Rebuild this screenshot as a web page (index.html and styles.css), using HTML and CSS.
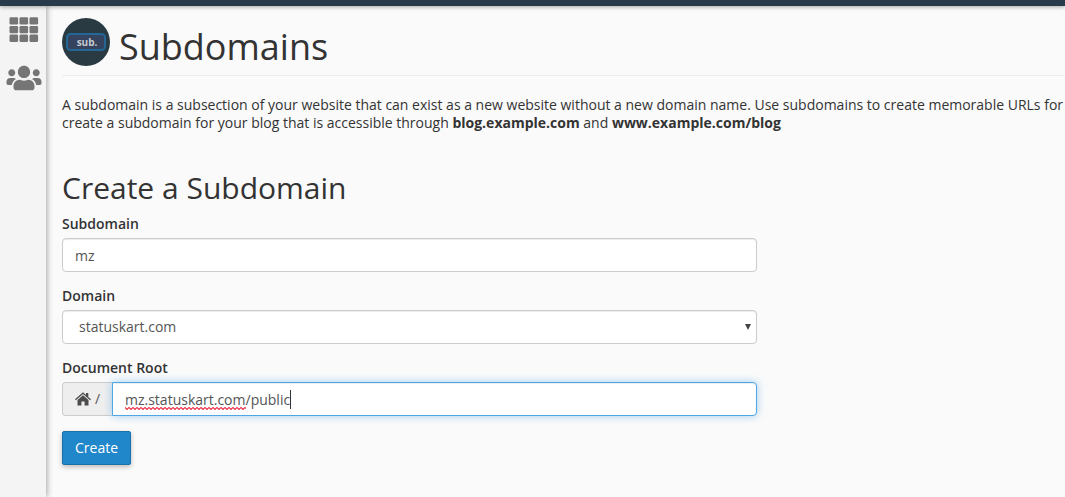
FILE: index.html
```html
<!DOCTYPE html>
<html lang="en">
<head>
<meta charset="utf-8">
<meta name="viewport" content="width=device-width, initial-scale=1">
<title>Subdomains</title>
<link rel="stylesheet" href="styles.css">
</head>
<body>
<header class="topbar"></header>
<div class="shell">
  <nav class="sidebar" aria-label="Main">
    <a class="nav-link" href="#home" aria-label="Home">
      <svg width="30" height="26" viewBox="0 0 30 26" fill="currentColor" aria-hidden="true">
        <rect x="0.5" y="0.2" width="8.6" height="7.4" rx="1.3"/><rect x="10.5" y="0.2" width="8.6" height="7.4" rx="1.3"/><rect x="20.5" y="0.2" width="8.6" height="7.4" rx="1.3"/>
        <rect x="0.5" y="9" width="8.6" height="7.2" rx="1.3"/><rect x="10.5" y="9" width="8.6" height="7.2" rx="1.3"/><rect x="20.5" y="9" width="8.6" height="7.2" rx="1.3"/>
        <rect x="0.5" y="17.600" width="8.6" height="7.4" rx="1.3"/><rect x="10.5" y="17.600" width="8.6" height="7.4" rx="1.3"/><rect x="20.5" y="17.600" width="8.6" height="7.4" rx="1.3"/>
      </svg>
    </a>
    <a class="nav-link" href="#users" aria-label="User Manager">
      <svg width="36" height="28" viewBox="0 0 640 512" fill="currentColor" aria-hidden="true">
        <path d="M96 224c35.300 0 64-28.700 64-64s-28.700-64-64-64-64 28.700-64 64 28.700 64 64 64zm448 0c35.300 0 64-28.700 64-64s-28.700-64-64-64-64 28.700-64 64 28.700 64 64 64zm32 32h-64c-17.600 0-33.500 7.100-45.100 18.600 40.300 22.100 68.900 62 75.100 109.400h66c17.700 0 32-14.300 32-32v-32c0-35.300-28.700-64-64-64zm-256 0c61.900 0 112-50.100 112-112S381.900 32 320 32 208 82.100 208 144s50.100 112 112 112zm76.800 32h-8.300c-20.800 10-43.900 16-68.500 16s-47.600-6-68.500-16h-8.300C179.600 288 128 339.600 128 403.200V432c0 26.500 21.500 48 48 48h288c26.500 0 48-21.500 48-48v-28.800c0-63.600-51.600-115.200-115.200-115.200zm-223.700-13.400C161.500 263.100 145.600 256 128 256H64c-35.300 0-64 28.700-64 64v32c0 17.700 14.300 32 32 32h65.900c6.300-47.400 34.900-87.300 75.200-109.400z"/>
      </svg>
    </a>
  </nav>
  <main class="content">
    <h1 class="page-title">
      <svg class="page-icon" width="48" height="48" viewBox="0 0 48 48" aria-hidden="true">
        <circle cx="24" cy="24" r="24" fill="#293a42"/>
        <rect x="5" y="16" width="38" height="16" rx="3.500" fill="#35435e" stroke="#236797" stroke-width="2"/>
        <text class="icon-text" x="25" y="28" text-anchor="middle">sub.</text>
      </svg>
      <span>Subdomains</span>
    </h1>
    <p class="intro">A subdomain is a subsection of your website that can exist as a new website without a new domain name. Use subdomains to create memorable URLs for create a subdomain for your blog that is accessible through <strong>blog.example.com</strong> and <strong>www.example.com/blog</strong></p>
    <h2 class="section-title">Create a Subdomain</h2>
    <form class="form">
      <div class="field">
        <label class="label" for="subdomain">Subdomain</label>
        <input class="control" id="subdomain" type="text" value="mz">
      </div>
      <div class="field">
        <label class="label" for="domain">Domain</label>
        <div class="select-wrap">
          <select class="control select" id="domain"><option>statuskart.com</option></select>
          <svg class="arrow" width="6" height="6" viewBox="0 0 6 6" aria-hidden="true"><path d="M0 0h6L3 6z" fill="#444"/></svg>
        </div>
      </div>
      <div class="field">
        <label class="label" for="root">Document Root</label>
        <div class="group">
          <span class="addon">
            <svg width="16" height="14" viewBox="0 0 16 14" fill="#4c4c4c" aria-hidden="true">
              <path d="M8 0.300 11 3V1h2.300v4L16 7.200l-.9 1L8 2.100.9 8.200 0 7.200z"/><path d="M8 3.300 13.500 8v5.500H9.600V9.500H6.400v4H2.500V8z"/>
            </svg>
            <span>/</span>
          </span>
          <div class="input-wrap">
            <input class="control active" id="root" type="text" value="mz.statuskart.com/public" spellcheck="false">
            <svg class="squiggle" width="121" height="3" aria-hidden="true">
              <defs><pattern id="wave" width="4" height="3" patternUnits="userSpaceOnUse"><path d="M-1 1.500 0 .5 2 2.500 4 .5 5 1.500" fill="none" stroke="#f0374c" stroke-width="1.200"/></pattern></defs>
              <rect width="121" height="3" fill="url(#wave)"/>
            </svg>
            <span class="caret"></span>
          </div>
        </div>
      </div>
      <button class="button" type="button">Create</button>
    </form>
  </main>
</div>
</body>
</html>
```

FILE: styles.css
```css
* { box-sizing: border-box; }
body {
  margin: 0;
  min-height: 100vh;
  display: flex;
  flex-direction: column;
  background: #fafafa;
  color: #333;
  font: 14px/18px "Open Sans", sans-serif;
}
.topbar {
  height: 6px;
  background: #293a4a;
  box-shadow: 0 1px 4px rgba(0, 0, 0, .35);
  z-index: 1;
}
.shell { flex: 1; display: flex; }
.sidebar {
  width: 46px;
  flex: none;
  padding-top: 11px;
  display: flex;
  flex-direction: column;
  align-items: center;
  gap: 21px;
  background: #f4f4f4;
  box-shadow: 1px 0 6px rgba(0, 0, 0, .35);
}
.nav-link { display: flex; color: #757575; margin-left: 2px; }
.content { flex: 1; min-width: 0; padding: 12px 0 32px 16px; }
.page-title {
  margin: 0 0 20px;
  padding-bottom: 9px;
  display: flex;
  gap: 9px;
  border-bottom: 1px solid #eee;
  font-size: 36px;
  line-height: 48px;
  font-weight: 400;
}
.page-title span { padding-top: 4px; line-height: 50px; margin-bottom: -6px; }
.page-icon { flex: none; }
.icon-text { font: 700 10px "Open Sans", sans-serif; fill: #c3c9d0; }
.intro { margin: 0; }
.section-title { margin: 38px 0 9px; font-size: 30px; line-height: 36px; font-weight: 400; }
.form { max-width: 695px; }
.field { margin-bottom: 15px; }
.label { display: block; margin-bottom: 5px; font-weight: 600; }
.control {
  display: block;
  width: 100%;
  height: 34px;
  padding: 6px 12px;
  border: 1px solid #ccc;
  border-radius: 4px;
  background: #fff;
  color: #555;
  font: inherit;
  outline: none;
  box-shadow: inset 0 1px 1px rgba(0, 0, 0, .075);
}
.select { appearance: none; padding-left: 16px; }
.select-wrap, .input-wrap { position: relative; }
.arrow { position: absolute; right: 6px; top: 14px; pointer-events: none; }
.group { display: flex; }
.addon {
  width: 50px;
  flex: none;
  display: flex;
  align-items: center;
  justify-content: center;
  gap: 4px;
  border: 1px solid #ccc;
  border-right: 0;
  border-radius: 4px 0 0 4px;
  background: #eee;
  color: #555;
}
.input-wrap { flex: 1; }
.active {
  border-color: #4fa8e6;
  border-radius: 0 4px 4px 0;
  box-shadow: inset 0 1px 1px rgba(0, 0, 0, .075), 0 0 8px rgba(102, 175, 233, .6);
  caret-color: transparent;
}
.squiggle { position: absolute; left: 13px; top: 25px; pointer-events: none; }
.caret { position: absolute; left: 178px; top: 8px; width: 1px; height: 19px; background: #333; }
.button {
  height: 34px;
  padding: 0 12px;
  border: 1px solid #1a70a8;
  border-radius: 2px;
  background: #2087cb;
  color: #fff;
  font: inherit;
  box-shadow: 0 2px 5px rgba(0, 0, 0, .25);
}
```
